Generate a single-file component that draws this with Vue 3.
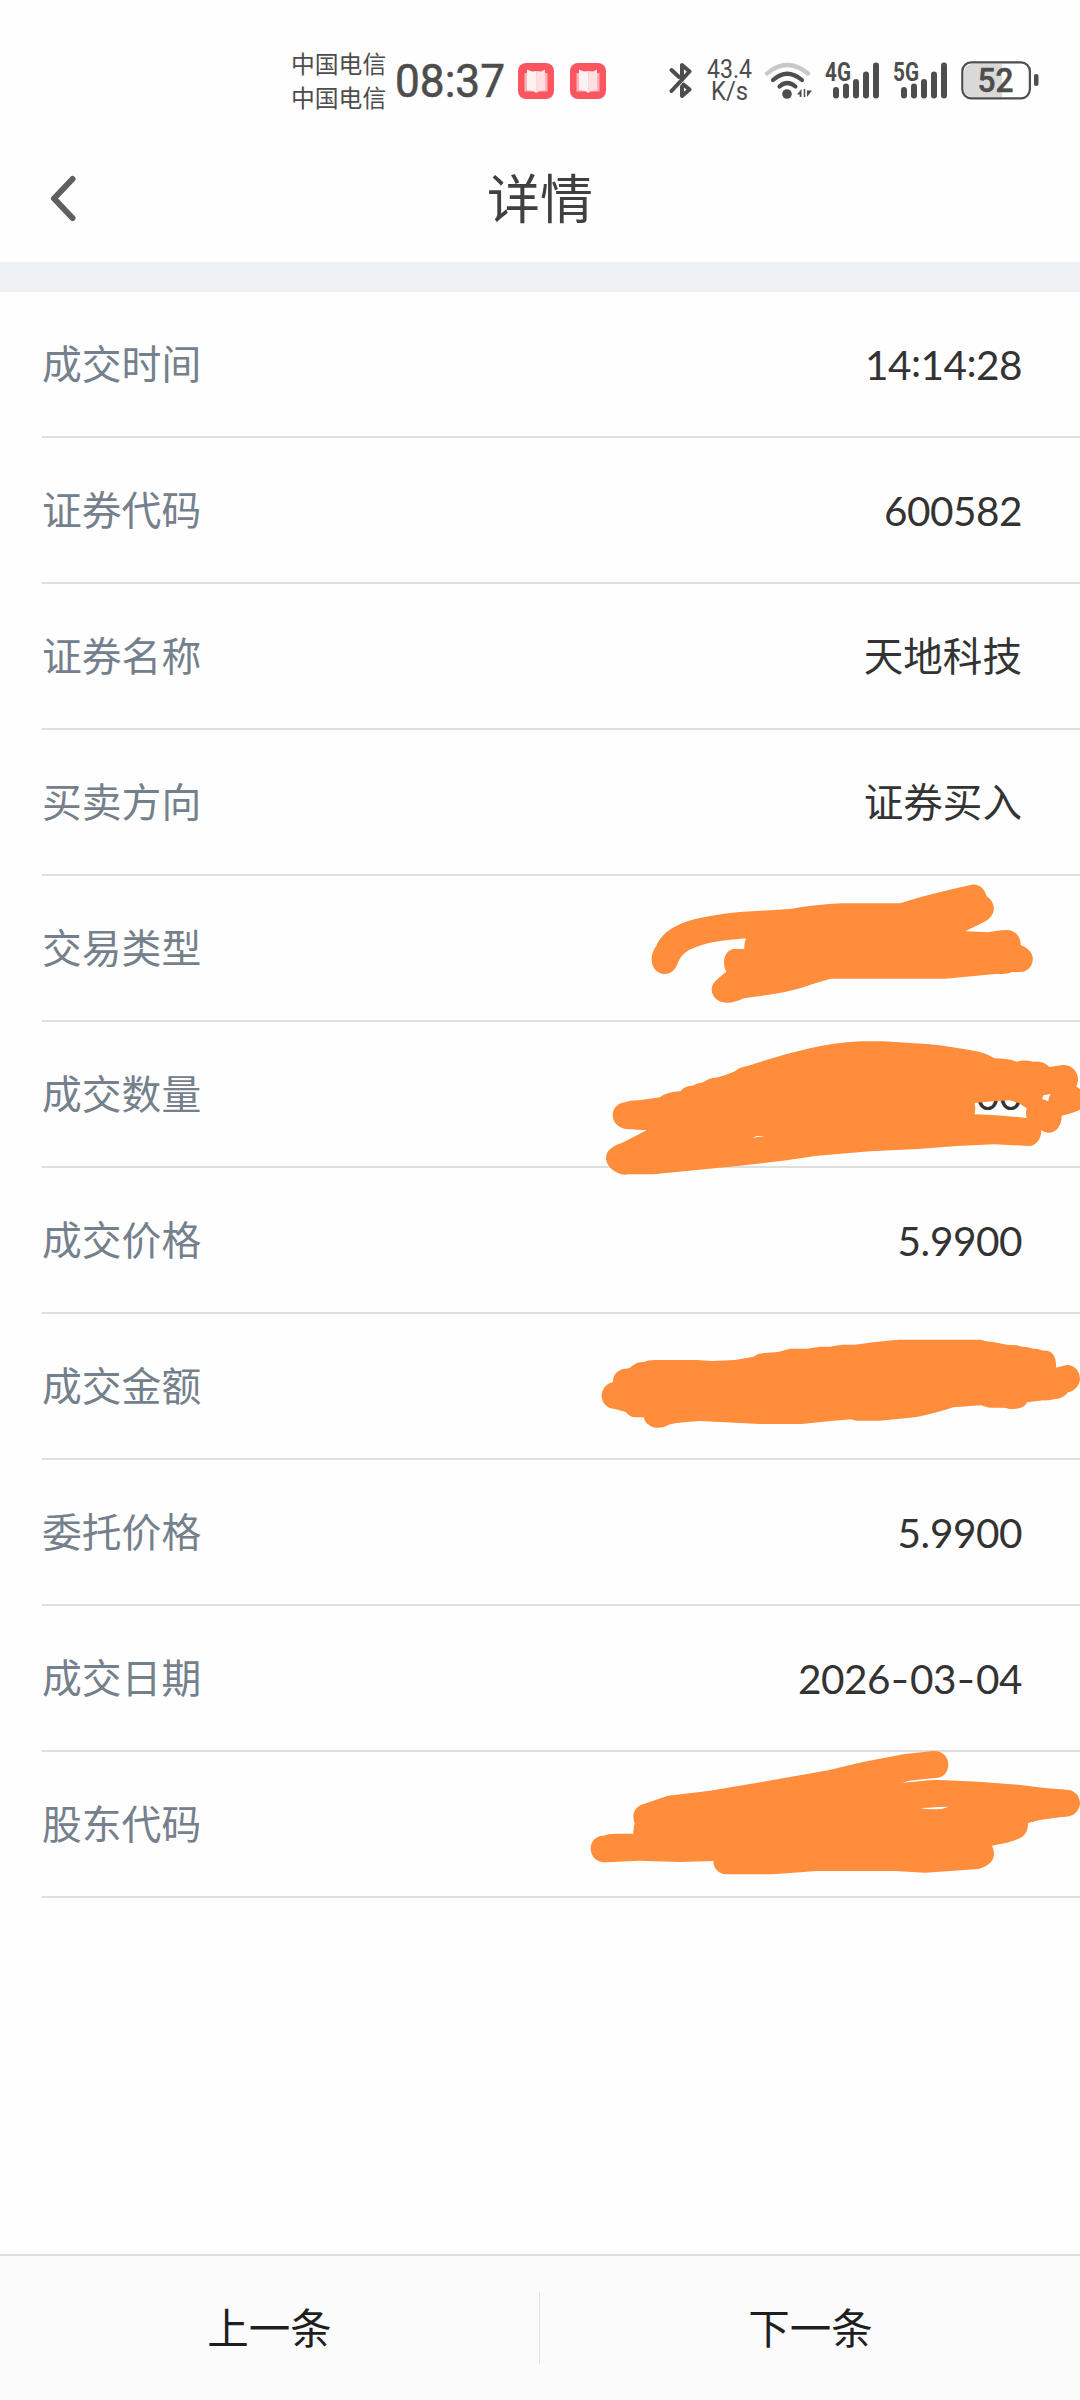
<template>
  <div class="page">
    <div class="status">
      <div class="carriers">
        <span>中国电信</span>
        <span>中国电信</span>
      </div>
      <svg class="clock" width="112" height="60" viewBox="0 0 112 60">
        <text x="0" y="46" textLength="110" lengthAdjust="spacingAndGlyphs">08:37</text>
      </svg>
      <svg v-for="n in 2" :key="n" class="book" width="36" height="36" viewBox="0 0 36 36">
        <rect width="36" height="36" rx="8" fill="#fb5660" />
        <path d="M6.500 10h23v18.500h-9l-2.500 1.500-2.500-1.500h-9z" fill="#fdb2b6" />
        <path d="M9 6.500l5 2 4.500-.5v21.500l-3-1.500-6.500-1z" fill="#fff0f1" />
        <path d="M27 6.500l-4 2-4.500-.5v21.500l3-1.500 5.500-1z" fill="#ffdfe2" />
      </svg>
      <svg class="bluetooth" width="24" height="38" viewBox="0 0 24 38">
        <path
          d="M2.500 8L10 15 M2.500 29L20.500 9.500L13 3V18 M14.500 22.500L20.500 27.500L13 34V24.500"
          fill="none" stroke="#4d4d4d" stroke-width="4" stroke-linecap="round" stroke-linejoin="round"
        />
      </svg>
      <svg class="speed" width="48" height="60" viewBox="0 0 48 60">
        <text x="1" y="27" textLength="45" lengthAdjust="spacingAndGlyphs">43.4</text>
        <text x="5" y="49" textLength="37" lengthAdjust="spacingAndGlyphs">K/s</text>
      </svg>
      <svg class="wifi" width="48" height="38" viewBox="0 0 48 38">
        <g fill="none" stroke-width="4.200" stroke-linecap="round">
          <path d="M3 11.500Q23 -5.500 44 11.500" stroke="#c8c8c8" />
          <path d="M9 18Q23 5.500 38 18" stroke="#4d4d4d" />
          <path d="M15.500 24.500Q23 17.500 31.500 24.500" stroke="#4d4d4d" />
        </g>
        <circle cx="23" cy="32" r="4.800" fill="#4d4d4d" />
        <path d="M33 32.500l4.500-5.500v8h-1.800v-2.500zM40.500 27v8M43 28.500h5l-5 6.500z" fill="#4d4d4d" />
        <path d="M40.500 27v8" stroke="#4d4d4d" stroke-width="1.500" />
      </svg>
      <svg v-for="g in ['4G', '5G']" :key="g" class="signal" width="55" height="50" viewBox="0 0 55 50">
        <text x="0" y="24.500" textLength="26" lengthAdjust="spacingAndGlyphs">{{ g }}</text>
        <g fill="#4d4d4d">
          <rect x="8" y="31" width="6" height="11.500" rx="3" />
          <rect x="18" y="27.500" width="6" height="15" rx="3" />
          <rect x="28" y="23" width="6" height="19.500" rx="3" />
          <rect x="38" y="15.500" width="6" height="27" rx="3" />
          <rect x="48" y="6.500" width="6" height="36" rx="3" />
        </g>
      </svg>
      <svg class="battery" width="78" height="40" viewBox="0 0 78 40">
        <path d="M41 3H11a8 8 0 0 0-8 8v17a8 8 0 0 0 8 8h30z" fill="#d9d9d9" />
        <rect x="1.300" y="1.300" width="67.600" height="36" rx="9" fill="none" stroke="#4d4d4d" stroke-width="2.200" />
        <rect x="73" y="13" width="4.500" height="12" rx="2" fill="#4d4d4d" />
        <text x="16.500" y="31" textLength="36" lengthAdjust="spacingAndGlyphs">52</text>
      </svg>
    </div>

    <header class="header">
      <svg class="back" width="30" height="50" viewBox="0 0 30 50">
        <path d="M24.500 5L6 24.500L24.500 44" fill="none" stroke="#606060" stroke-width="6" stroke-linecap="round" stroke-linejoin="round" />
      </svg>
      <h1>详情</h1>
    </header>

    <main class="list">
      <div v-for="row in rows" :key="row.label" class="row">
        <span class="label">{{ row.label }}</span>
        <span v-if="row.cjk" class="value cjk">{{ row.value }}</span>
        <span v-else class="value"><span v-for="(c, i) in row.value" :key="i" :class="charClass(c)">{{ c }}</span></span>
        <svg
          v-if="row.mark"
          class="mark"
          :style="{ top: row.top + 'px' }"
          :width="row.width"
          height="180"
          :viewBox="`0 0 ${row.width * 3} 540`"
        >
          <path :d="row.mark" fill="#ff8d3b" fill-rule="evenodd" />
        </svg>
      </div>
    </main>

    <footer class="footer">
      <button>上一条</button>
      <i class="divider"></i>
      <button>下一条</button>
    </footer>
  </div>
</template>

<script setup>
// hand-drawn marker strokes, drawn at three units per pixel
const typeMark =
  'M215 300Q214 277 229 258Q236 238 259 217Q291 190 346 177Q408 163 478 156L630 147Q710 133 785 130H960Q1030 106 1175 74C1197 70 1215 88 1220 109C1248 128 1250 163 1218 183L1156 214L1225 217Q1250 211 1285 210C1308 213 1323 232 1322 255C1350 266 1361 285 1358 302C1355 323 1339 336 1320 336H1296Q1283 343 1245 342L1096 356H752Q710 367 660 385Q615 398 576 403L491 415Q460 430 437 428C400 426 386 391 401 370Q410 357 439 335C426 310 430 274 460 267H493Q492 250 498 235Q400 242 350 260Q305 275 294 307C287 330 273 342 254 342C230 341 216 324 215 300Z'

const countMark =
  'M98 286C98 265 113 249 135 247Q155 239 178 241L240 232Q260 215 301 214Q313 197 337 197Q351 189 370 187Q386 173 408 173Q440 166 465 154Q477 142 500 139Q600 105 690 85Q760 69 840 64H910Q980 68 1050 73Q1130 82 1200 96Q1228 105 1243 115Q1280 115 1310 125Q1335 118 1358 125Q1390 122 1408 141L1448 135C1483 134 1504 166 1489 200Q1500 204 1506 216V266Q1478 281 1445 287C1446 316 1429 339 1404 338Q1396 338 1383 331C1386 353 1369 378 1348 378L1243 373Q1130 377 1015 387L870 394L705 408L620 421L480 437L220 463H147Q126 466 114 459C76 444 68 405 91 387Q103 376 124 370L200 331L137 327C114 324 99 307 98 286ZM1184 249L1186 265L1184 283L1235 285L1303 290L1340 294Q1336 279 1340 265L1316 249L1290 241Q1240 243 1184 249ZM1390 226L1387 237L1405 244Q1405 233 1412 222ZM518 353L530 348L558 349Q540 350 518 353Z'

const amountMark =
  'M65 227C65 207 80 190 99 186C98 163 116 145 139 146Q151 145 159 136Q172 125 192 126Q202 120 225 120H350L395 123L465 120L521 110Q534 100 553 99L594 96L630 86L680 86L720 80H750L785 74H825L885 66L955 59H1205Q1215 65 1240 66L1280 74L1310 76Q1325 82 1340 81Q1355 87 1373 87L1390 92C1417 90 1430 111 1428 143L1459 135C1486 135 1500 155 1500 178C1498 198 1483 215 1464 217Q1450 236 1425 237Q1408 242 1390 241L1341 247C1333 265 1315 267 1290 267L1273 263H1227L1203 256L1120 262Q1055 283 1005 292L900 302H830L812 298Q740 304 665 312H540L360 303Q310 305 270 313C248 325 233 326 216 320C200 313 192 301 192 292H168Q150 293 137 276L105 267C79 265 65 247 65 227Z'

const holderMark =
  'M62 356C62 333 79 316 101 317Q114 311 137 311H190Q189 293 194 281C184 253 194 231 219 223L294 197L420 182L580 155L775 121L875 97L1000 73L1088 63C1115 60 1135 79 1135 104C1134 126 1121 142 1101 143L1018 152L996 158L1050 154Q1080 149 1110 150L1225 155L1345 164L1425 174L1490 179C1513 179 1530 198 1530 220C1529 243 1510 260 1489 260L1474 261L1410 270L1374 279C1374 301 1367 316 1350 324Q1330 334 1310 338L1266 347C1278 373 1271 395 1252 405Q1235 417 1215 418L1065 428L975 423H740L610 433H468C445 432 430 414 430 393L330 396L205 392L110 397C81 398 63 382 62 356ZM1050 234Q1080 241 1117 236L1136 230L1105 231Q1075 234 1050 234Z'

const rows = [
  { label: '成交时间', value: '14:14:28' },
  { label: '证券代码', value: '600582' },
  { label: '证券名称', value: '天地科技', cjk: true },
  { label: '买卖方向', value: '证券买入', cjk: true },
  { label: '交易类型', value: '', mark: typeMark, top: -16, width: 500 },
  { label: '成交数量', value: '00', mark: countMark, top: -2, width: 500 },
  { label: '成交价格', value: '5.9900' },
  { label: '成交金额', value: '', mark: amountMark, top: 6, width: 500 },
  { label: '委托价格', value: '5.9900' },
  { label: '成交日期', value: '2026-03-04' },
  { label: '股东代码', value: '', mark: holderMark, top: -22, width: 510 },
]

function charClass(c) {
  if (c === ':') return 'char colon'
  if (c === '-') return 'char dash'
  if (c === '.') return 'char dot'
  return 'char'
}
</script>

<style>
body {
  margin: 0;
  background: #fefefe;
}
</style>

<style scoped>
.page {
  display: flex;
  flex-direction: column;
  width: 1080px;
  height: 2400px;
  overflow: hidden;
  background: #fefefe;
  font-family: Lato, "Noto Sans CJK SC", sans-serif;
}

.status {
  display: flex;
  align-items: center;
  height: 162px;
  padding-left: 291px;
  box-sizing: border-box;
  flex: none;
}

.status text {
  font-family: Roboto, sans-serif;
  fill: #4d4d4d;
}

.carriers {
  display: flex;
  flex-direction: column;
  width: 96px;
  margin-bottom: 3px;
  font-family: "Noto Sans CJK SC", sans-serif;
  font-size: 23.8px;
  line-height: 34px;
  color: #4d4d4d;
}

.clock {
  margin-left: 8px;
}

.clock text {
  font-size: 47px;
  font-weight: 400;
  stroke: #4d4d4d;
  stroke-width: 0.6px;
}

.book {
  margin-left: 11px;
}

.book + .book {
  margin-left: 16px;
}

.bluetooth {
  margin-left: 63px;
}

.speed {
  margin-left: 13px;
}

.speed text {
  font-size: 25px;
}

.wifi {
  margin-left: 10px;
}

.signal {
  margin-left: 13px;
}

.signal text {
  font-size: 25px;
  font-weight: 700;
}

.battery {
  margin-left: 13px;
}

.battery text {
  font-size: 33.5px;
  font-weight: 500;
  stroke: #4d4d4d;
  stroke-width: 0.5px;
}

.header {
  position: relative;
  display: flex;
  align-items: center;
  justify-content: center;
  height: 100px;
  border-bottom: 30px solid #edf1f4;
  flex: none;
}

.back {
  position: absolute;
  left: 48px;
  top: 12px;
}

h1 {
  margin: 0 0 26px;
  font-size: 53px;
  font-weight: 400;
  line-height: 76px;
  color: #404040;
}

.row {
  position: relative;
  display: flex;
  align-items: center;
  justify-content: space-between;
  height: 144px;
  margin-left: 42px;
  padding-right: 58px;
  border-bottom: 2px solid #dfdfdf;
}

.label {
  margin-bottom: 5px;
  font-size: 39.8px;
  color: #74808c;
}

.value {
  display: flex;
  font-size: 40.5px;
  color: #333;
}

.cjk {
  margin-bottom: 5px;
  font-size: 39.6px;
}

.char {
  width: 23px;
  text-align: center;
}

.colon {
  width: 9.500px;
  margin-top: -3px;
}

.dot {
  width: 9.500px;
}

.dash {
  width: 20px;
  transform: scaleX(1.25);
}

.mark {
  position: absolute;
  right: 0;
}

.footer {
  display: flex;
  align-items: center;
  height: 144px;
  margin-top: auto;
  border-top: 2px solid #dfdfdf;
  background: #fbfbfb;
  flex: none;
}

.footer button {
  flex: 1;
  padding: 0 0 5px;
  border: 0;
  background: none;
  font-family: inherit;
  font-size: 41.5px;
  color: #1f1f1f;
}

.divider {
  width: 1px;
  height: 72px;
  margin-right: 1px;
  background: #e3e3e3;
}
</style>
